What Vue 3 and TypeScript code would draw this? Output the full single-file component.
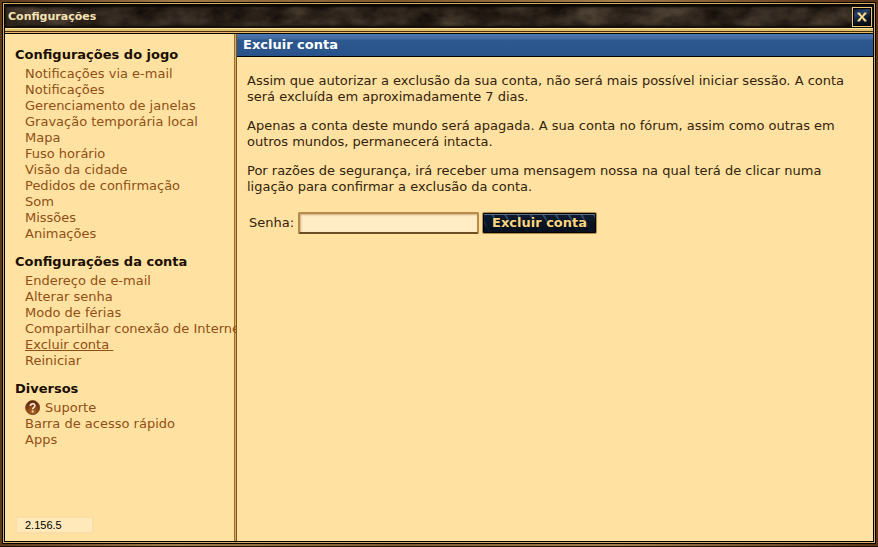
<script setup lang="ts">
import { ref } from 'vue'

interface MenuItem {
  label: string
  help?: boolean
}
interface MenuGroup {
  title: string
  items: MenuItem[]
}

const groups: MenuGroup[] = [
  {
    title: 'Configurações do jogo',
    items: [
      { label: 'Notificações via e-mail' },
      { label: 'Notificações' },
      { label: 'Gerenciamento de janelas' },
      { label: 'Gravação temporária local' },
      { label: 'Mapa' },
      { label: 'Fuso horário' },
      { label: 'Visão da cidade' },
      { label: 'Pedidos de confirmação' },
      { label: 'Som' },
      { label: 'Missões' },
      { label: 'Animações' },
    ],
  },
  {
    title: 'Configurações da conta',
    items: [
      { label: 'Endereço de e-mail' },
      { label: 'Alterar senha' },
      { label: 'Modo de férias' },
      { label: 'Compartilhar conexão de Internet' },
      { label: 'Excluir conta' },
      { label: 'Reiniciar' },
    ],
  },
  {
    title: 'Diversos',
    items: [
      { label: 'Suporte', help: true },
      { label: 'Barra de acesso rápido' },
      { label: 'Apps' },
    ],
  },
]

const selected = ref('Excluir conta')
const password = ref('')
</script>

<template>
  <div class="window">
    <div class="frame">
      <div class="panel">
        <header class="titlebar">
          <svg class="texture" aria-hidden="true">
            <filter id="stone" x="0" y="0" width="100%" height="100%" color-interpolation-filters="sRGB">
              <feTurbulence type="fractalNoise" baseFrequency="0.03 0.05" numOctaves="5" seed="8" />
              <feColorMatrix values="0.36 0 0 0 0.01  0.32 0 0 0 -0.01  0.27 0 0 0 -0.02  0 0 0 0 1" />
            </filter>
            <rect width="100%" height="100%" filter="url(#stone)" />
          </svg>
          <h1 class="title">Configurações</h1>
          <button class="close" type="button" aria-label="Fechar">
            <svg viewBox="0 0 10 10" width="10" height="10">
              <path d="M0.5 0.5H2.8L5 3.8 7.2 0.5H9.5V1.8L6.3 5 9.5 8.2V9.5H7.2L5 6.2 2.8 9.5H0.5V8.2L3.7 5 0.5 1.8Z" fill="#f3cf74" />
              <path d="M1.5 1.5 8.5 8.5M8.5 1.5 1.5 8.5" stroke="#fff0b0" stroke-width="0.6" />
            </svg>
          </button>
        </header>
        <div class="rail"></div>
        <div class="body">
          <nav class="sidebar">
            <section v-for="group in groups" :key="group.title" class="group">
              <h2>{{ group.title }}</h2>
              <ul>
                <li v-for="item in group.items" :key="item.label" :class="{ support: item.help }">
                  <svg v-if="item.help" class="help" viewBox="0 0 16 16" aria-hidden="true">
                    <defs>
                      <radialGradient id="orb" cx="50%" cy="80%" r="75%">
                        <stop offset="0" stop-color="#b5651f" />
                        <stop offset="1" stop-color="#5a280e" />
                      </radialGradient>
                    </defs>
                    <circle cx="7.6" cy="7.6" r="7" fill="url(#orb)" stroke="#6b3511" stroke-width="0.8" />
                    <path d="M5.4 6C5.4 2.9 10 3 9.9 5.7 9.8 7.4 7.7 7.4 7.7 9.2" fill="none" stroke="#f5e6d3" stroke-width="1.6" />
                    <circle cx="7.7" cy="11.4" r="1" fill="#f5e6d3" />
                  </svg>
                  <a
                    href="#"
                    :class="{ selected: item.label === selected }"
                    @click.prevent="selected = item.label"
                  >{{ item.label }}<template v-if="item.label === selected">&nbsp;</template></a>
                </li>
              </ul>
            </section>
            <div class="version">2.156.5</div>
          </nav>
          <main class="content">
            <h2 class="heading">Excluir conta</h2>
            <div class="copy">
              <p>Assim que autorizar a exclusão da sua conta, não será mais possível iniciar sessão. A conta será excluída em aproximadamente 7 dias.</p>
              <p>Apenas a conta deste mundo será apagada. A sua conta no fórum, assim como outras em outros mundos, permanecerá intacta.</p>
              <p>Por razões de segurança, irá receber uma mensagem nossa na qual terá de clicar numa ligação para confirmar a exclusão da conta.</p>
              <form class="form" @submit.prevent>
                <label for="password">Senha:</label>
                <input id="password" v-model="password" type="password" />
                <button class="submit" type="submit">Excluir conta</button>
              </form>
            </div>
          </main>
        </div>
      </div>
    </div>
  </div>
</template>

<style>
body {
  background: #2a160b;
}
</style>

<style scoped>
.window,
.window * {
  box-sizing: border-box;
}
.window {
  min-height: 100vh;
  display: flex;
  padding: 2px 2px 3px;
  background: linear-gradient(90deg, #5e3a1d, #a17a48 20%, #80592f 45%, #a17d4b 70%, #5c3216);
  box-shadow: inset 0 -1px 0 #1d130b;
  font: 13px/16px "DejaVu Sans", Verdana, sans-serif;
  color: #33230d;
}
.frame {
  flex: 1;
  min-width: 0;
  display: flex;
  border: 1px solid #000;
  padding: 1px;
  background: #d9ab63;
}
.panel {
  flex: 1;
  min-width: 0;
  display: flex;
  flex-direction: column;
  border: 1px solid #000;
}
h1,
h2,
p,
ul {
  margin: 0;
  padding: 0;
}
.titlebar {
  position: relative;
  display: flex;
  align-items: center;
  justify-content: space-between;
  height: 23px;
  padding: 0 1px 0 3px;
  background: #2a2119;
}
.texture {
  position: absolute;
  inset: 0;
  width: 100%;
  height: 100%;
}
.titlebar::after {
  content: "";
  position: absolute;
  inset: 0;
  box-shadow: inset 0 2px 2px #0b0805, inset 0 -2px 2px #120c07;
  pointer-events: none;
}
.title {
  position: relative;
  font-size: 11px;
  line-height: 16px;
  color: #f4e3b3;
}
.close {
  position: relative;
  z-index: 1;
  width: 20px;
  height: 20px;
  display: grid;
  place-items: center;
  padding: 0;
  border: 1px solid #ecc877;
  background: linear-gradient(160deg, #0a1426, #25406a 30%, #0b1526 65%, #05090f);
  box-shadow: inset 0 0 0 1px #000;
}
.rail {
  height: 6px;
  border-bottom: 1px solid #000;
  background: linear-gradient(#fbe6a4 0 1px, #e2c069 1px 3px, #4a2e10 3px 4px, #e5b96c 4px);
}
.body {
  flex: 1;
  display: grid;
  grid-template-columns: 232px minmax(0, 1fr);
  background: #ffe2a1;
}
.sidebar {
  display: flex;
  flex-direction: column;
  padding: 13px 0 7px 10px;
  white-space: nowrap;
  overflow: hidden;
  background: linear-gradient(90deg, #9a702f 0 1px, #d8ac5c 1px 2px, #80561f 2px) right / 3px 100% no-repeat;
}
.group {
  margin-bottom: 12px;
}
.group h2 {
  font-size: 13px;
  line-height: 16px;
  color: #1b0e03;
  margin-bottom: 3px;
}
.group ul {
  list-style: none;
  padding-left: 10px;
}
.group a {
  color: #8f4f17;
  text-decoration: none;
}
.group a.selected {
  text-decoration: underline;
}
.support {
  display: flex;
  gap: 4px;
}
.help {
  width: 16px;
  height: 16px;
}
.version {
  width: 79px;
  margin-top: auto;
  padding: 0 8px;
  border: 2px solid #fbdda6;
  background: #ffe9bb;
  font: 11px/14px "Liberation Sans", Arial, sans-serif;
  color: #000;
}
.heading {
  height: 23px;
  padding: 0 6px;
  border-bottom: 1px solid #000;
  background: linear-gradient(#4a78b0, #41699f 5px, #2d5990 6px, #29528a);
  font-size: 13px;
  line-height: 22px;
  color: #fff;
}
.copy {
  padding: 16px 10px;
}
.copy p {
  margin-bottom: 13px;
}
.form {
  display: flex;
  align-items: center;
  gap: 3px;
  padding: 4px 2px;
}
.form label {
  margin-right: 1px;
}
.form input {
  width: 181px;
  height: 22px;
  padding: 2px 4px;
  border: 2px solid #b58c4a;
  border-bottom-color: #6b4e22;
  border-radius: 2px;
  background: #ffecc5;
  box-shadow: inset 1px 1px 2px #cfae83;
  font: inherit;
  outline: none;
}
.submit {
  height: 22px;
  padding: 0 9px;
  border: 1px solid #b58c4a;
  border-radius: 2px;
  background:
    linear-gradient(#0a162600 20%, #070f1ce0 75%),
    repeating-linear-gradient(60deg, #29486800 0 5px, #33587d 6px, #29486800 8px 11px),
    #0c1a2d;
  box-shadow: inset 0 0 0 1px #000, inset 0 2px 0 #5d6f80;
  font: bold 13px/18px "DejaVu Sans", Verdana, sans-serif;
  color: #f8d584;
  text-shadow: 0 0 2px #000;
}
</style>
